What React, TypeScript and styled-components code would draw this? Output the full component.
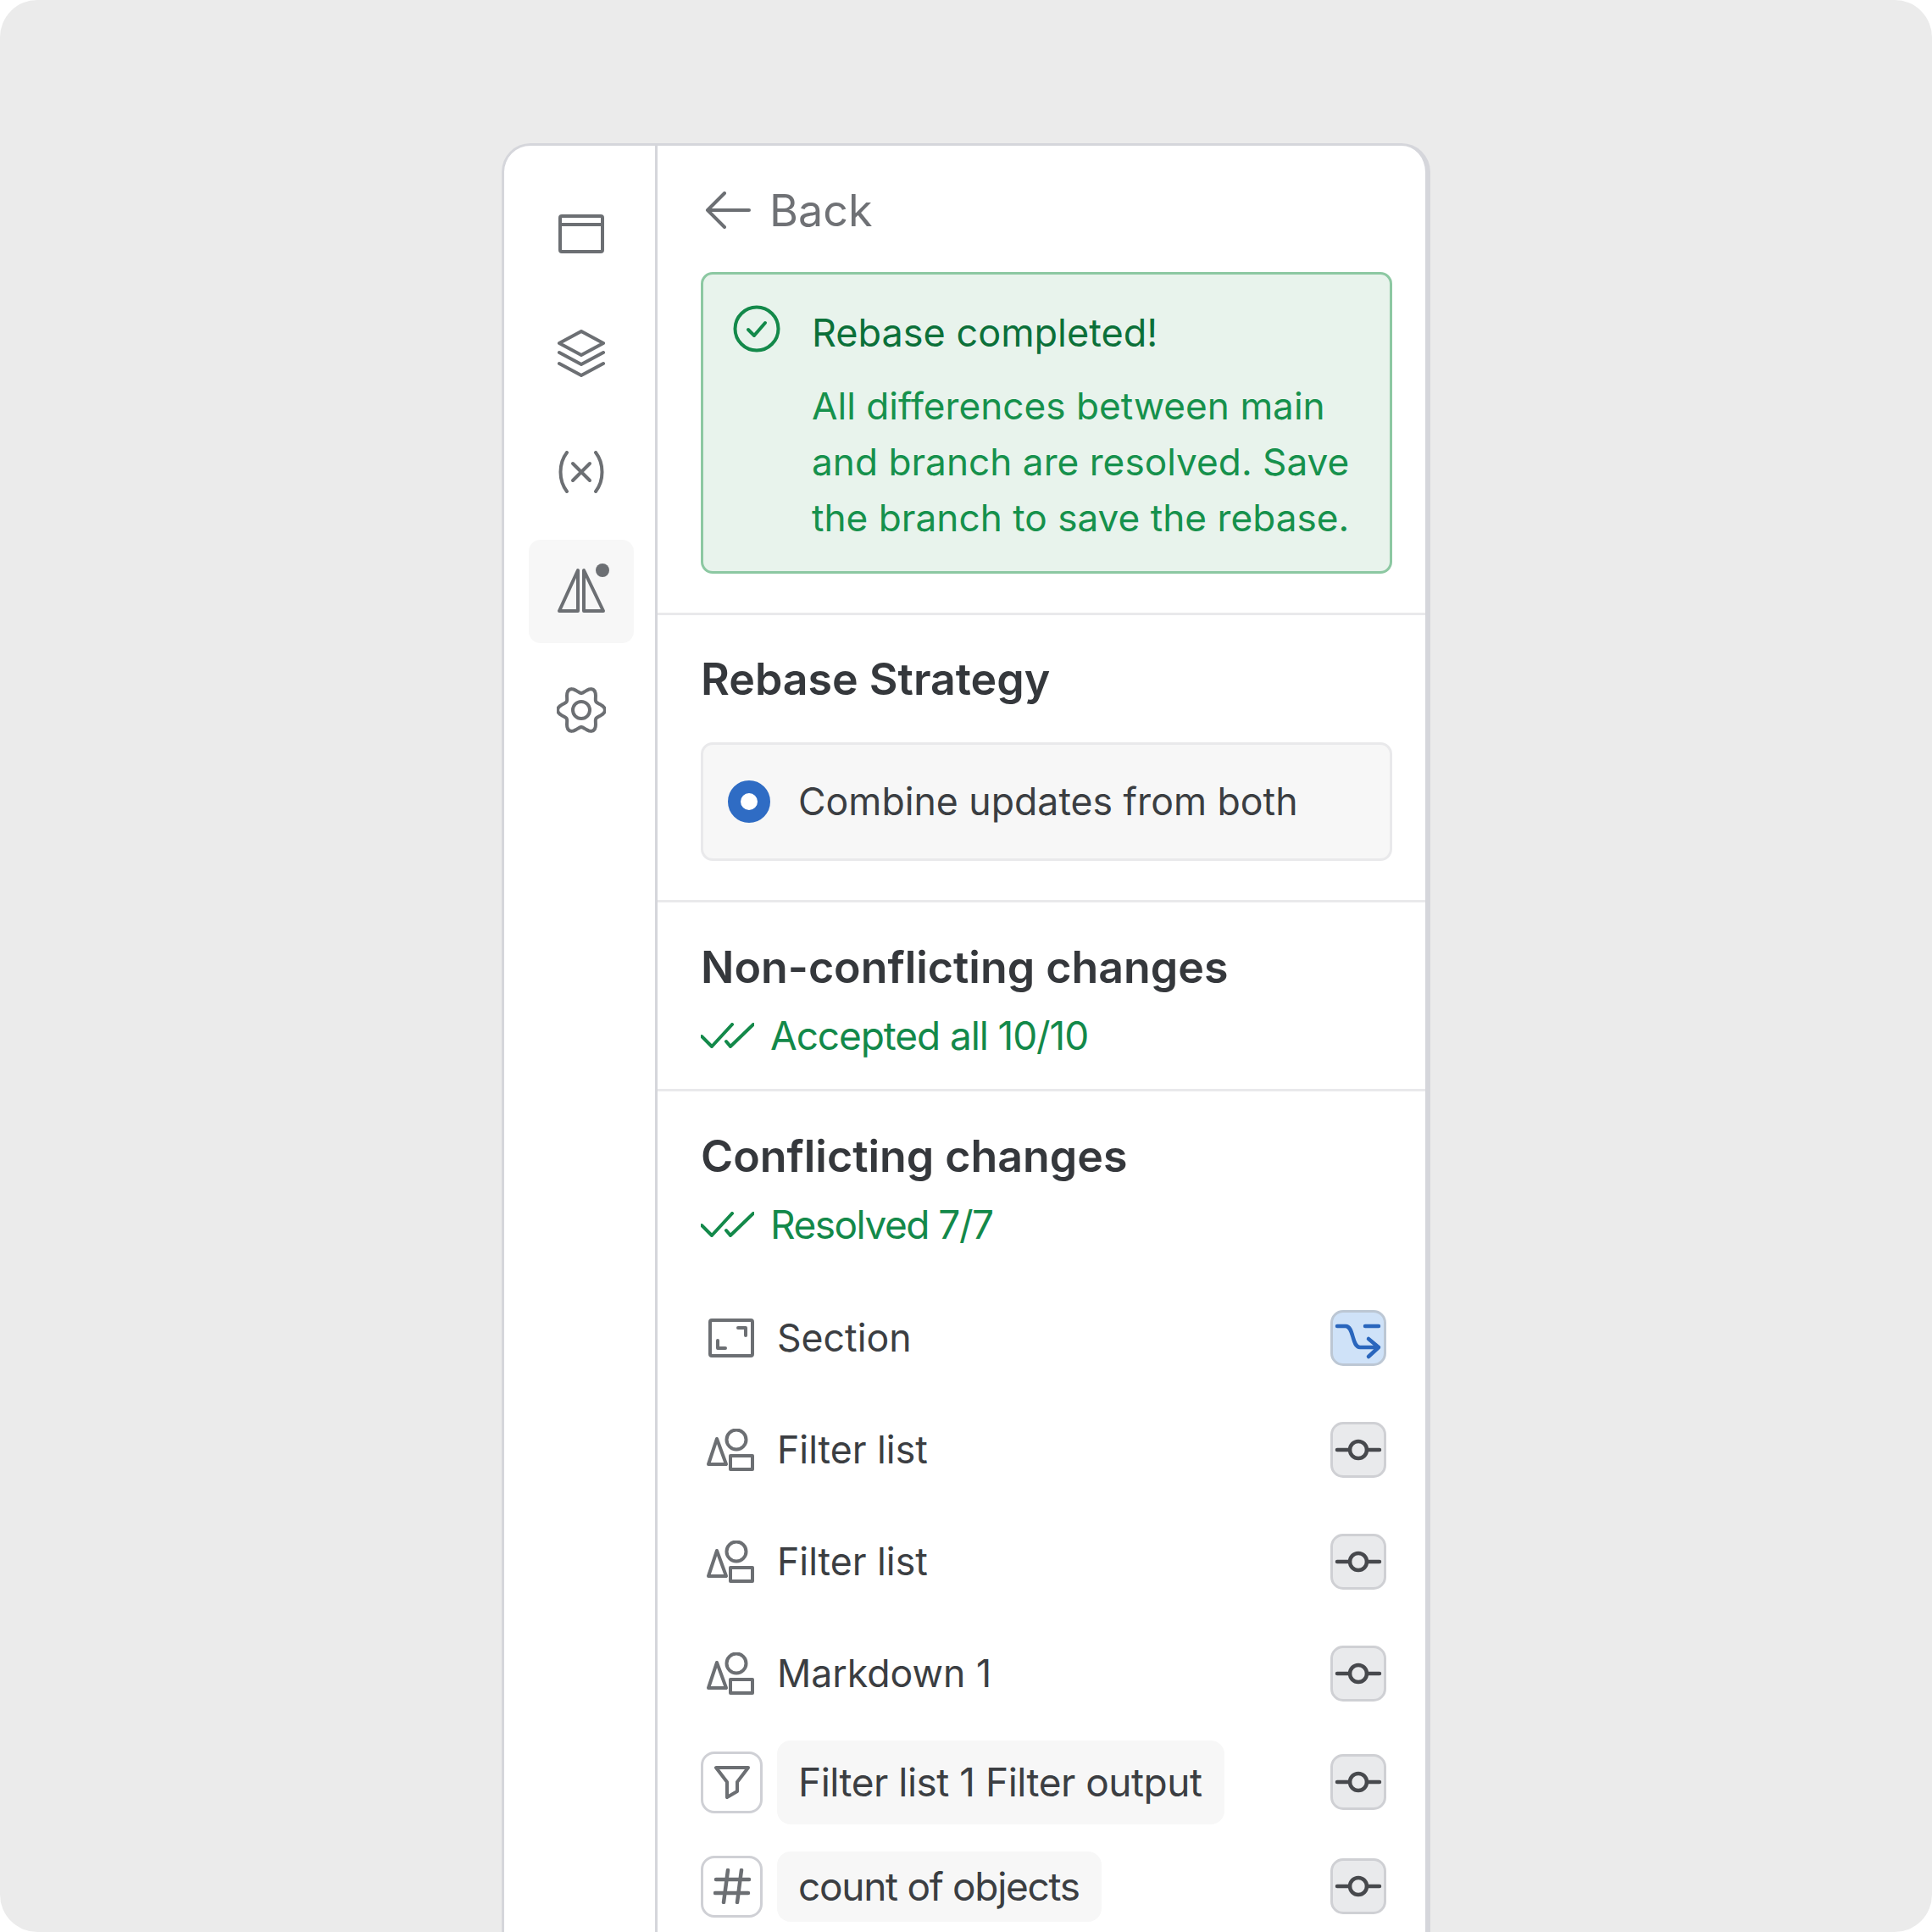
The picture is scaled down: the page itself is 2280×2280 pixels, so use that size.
import React from 'react'
import styled, { createGlobalStyle } from 'styled-components'

const GlobalStyle = createGlobalStyle`
  html, body {
    margin: 0;
    padding: 0;
    background: #fff;
  }
  * {
    box-sizing: border-box;
  }
`

const GREY = '#6c6f73'

// six petal outline of the settings icon
const gearPath = (() => {
  const pts: string[] = []
  for (let i = 0; i < 72; i++) {
    const a = (i / 72) * Math.PI * 2
    const r = 24 + 4 * Math.cos(a * 6)
    pts.push(`${(29 + r * Math.cos(a)).toFixed(2)} ${(28 + r * Math.sin(a)).toFixed(2)}`)
  }
  return `M${pts.join('L')}Z`
})()

function WindowIcon() {
  return (
    <S.Icon width="54" height="46" viewBox="0 0 54 46" $color={GREY}>
      <rect x="2" y="2" width="50" height="42" rx="2" />
      <path d="M2 12h50" />
    </S.Icon>
  )
}

function LayersIcon() {
  return (
    <S.Icon width="56" height="56" viewBox="0 0 56 56" $color={GREY}>
      <path d="M28 2l26 14-26 14L2 16z" />
      <path d="M2 27l26 14 26-14" />
      <path d="M2 40l26 14 26-14" />
    </S.Icon>
  )
}

function VariableIcon() {
  return (
    <S.Icon width="56" height="50" viewBox="0 0 56 50" $color={GREY}>
      <path d="M11 2C1 15 1 35 11 48" />
      <path d="M45 2c10 13 10 33 0 46" />
      <path d="M18 15l20 20M38 15L18 35" />
    </S.Icon>
  )
}

function CompareIcon() {
  return (
    <S.Icon width="74" height="74" viewBox="-6 -6 74 74" $color={GREY}>
      <path d="M27 6v48H5z" />
      <path d="M34 6v48h23z" />
      <circle cx="56" cy="6" r="8" fill="#6c6f73" stroke="none" />
    </S.Icon>
  )
}

function GearIcon() {
  return (
    <S.Icon width="58" height="56" viewBox="0 0 58 56" $color={GREY}>
      <path d={gearPath} />
      <circle cx="29" cy="28" r="10" />
    </S.Icon>
  )
}

function BackArrow() {
  return (
    <S.Icon width="54" height="44" viewBox="0 0 54 44" $color={GREY}>
      <path d="M52 22H3M23 2L3 22l20 20" />
    </S.Icon>
  )
}

function CheckCircle() {
  return (
    <S.Icon width="56" height="56" viewBox="0 0 56 56" $color="#13894a">
      <circle cx="28" cy="28" r="25.5" />
      <path d="M18 29l7 7 13-15" />
    </S.Icon>
  )
}

function DoubleCheck() {
  return (
    <S.Icon width="63" height="30" viewBox="0 0 63 30" $color="#13894a">
      <path d="M1 16l12 12L37 2" />
      <path d="M30 22l5 6L62 2" />
    </S.Icon>
  )
}

function SectionIcon() {
  return (
    <S.Icon width="54" height="46" viewBox="0 0 54 46" $color={GREY}>
      <rect x="2" y="2" width="50" height="42" rx="2" />
      <path d="M35 11h9v9M20 35h-9v-9" />
    </S.Icon>
  )
}

function ShapesIcon() {
  return (
    <S.Icon width="56" height="50" viewBox="0 0 56 50" $color={GREY}>
      <path d="M12 12l11 30H2z" />
      <circle cx="35" cy="13" r="11.5" />
      <rect x="28" y="32" width="26" height="16" />
    </S.Icon>
  )
}

function FunnelIcon() {
  return (
    <S.Icon width="44" height="40" viewBox="0 0 44 40" $color={GREY}>
      <path d="M3 3h38L28 20v11l-12 7V20z" />
    </S.Icon>
  )
}

function HashIcon() {
  return (
    <S.Icon width="44" height="42" viewBox="0 0 44 42" $color={GREY} $weight={4.5}>
      <path d="M17 2l-5 38M33 2l-5 38M3 13h39M2 29h39" />
    </S.Icon>
  )
}

function MergeIcon() {
  return (
    <S.Icon width="60" height="60" viewBox="0 0 60 60" $color="#2a66bd" $weight={4.5}>
      <path d="M5 16h10c10 0 7 25 17 25h22M42 31l12 10-12 11M38 16h16" />
    </S.Icon>
  )
}

function CommitIcon() {
  return (
    <S.Icon width="60" height="60" viewBox="0 0 60 60" $color="#47494d" $weight={4.5}>
      <circle cx="30" cy="30" r="10" />
      <path d="M5 30h15M40 30h15" />
    </S.Icon>
  )
}

const NAV_ITEMS = [
  { key: 'window', icon: <WindowIcon /> },
  { key: 'layers', icon: <LayersIcon /> },
  { key: 'variables', icon: <VariableIcon /> },
  { key: 'compare', icon: <CompareIcon />, active: true },
  { key: 'settings', icon: <GearIcon /> },
]

const PLAIN_ROWS = [
  { label: 'Section', icon: <SectionIcon />, picked: true },
  { label: 'Filter list', icon: <ShapesIcon /> },
  { label: 'Filter list', icon: <ShapesIcon /> },
  { label: 'Markdown 1', icon: <ShapesIcon /> },
]

function App(): React.JSX.Element {
  return (
    <S.Stage>
      <GlobalStyle />
      <S.Panel>
        <S.Sidebar>
          {NAV_ITEMS.map(item => (
            <S.NavItem key={item.key} $active={item.active}>
              {item.icon}
            </S.NavItem>
          ))}
        </S.Sidebar>
        <S.Main>
          <S.TopSection>
            <S.BackRow>
              <BackArrow />
              <S.BackLabel>Back</S.BackLabel>
            </S.BackRow>
            <S.Alert>
              <S.AlertIcon>
                <CheckCircle />
              </S.AlertIcon>
              <div>
                <S.AlertTitle>Rebase completed!</S.AlertTitle>
                <S.AlertBody>
                  All differences between main
                  <br />
                  and branch are resolved. Save
                  <br />
                  the branch to save the rebase.
                </S.AlertBody>
              </div>
            </S.Alert>
          </S.TopSection>

          <S.StrategySection>
            <S.Heading>Rebase Strategy</S.Heading>
            <S.RadioBox>
              <S.Radio />
              <S.BodyText>Combine updates from both</S.BodyText>
            </S.RadioBox>
          </S.StrategySection>

          <S.ChangesSection>
            <S.Heading>Non-conflicting changes</S.Heading>
            <S.Status>
              <DoubleCheck />
              <S.StatusText $tracking={-1.1}>Accepted all 10/10</S.StatusText>
            </S.Status>
          </S.ChangesSection>

          <S.ConflictSection>
            <S.Heading>Conflicting changes</S.Heading>
            <S.Status>
              <DoubleCheck />
              <S.StatusText $tracking={-1.5}>Resolved 7/7</S.StatusText>
            </S.Status>
            <S.RowList>
              {PLAIN_ROWS.map((row, i) => (
                <S.Row key={i} $height={132}>
                  <S.RowIcon>{row.icon}</S.RowIcon>
                  <S.RowLabel>{row.label}</S.RowLabel>
                  <S.RowButton $picked={row.picked}>
                    {row.picked ? <MergeIcon /> : <CommitIcon />}
                  </S.RowButton>
                </S.Row>
              ))}
              <S.Row $height={124}>
                <S.IconBox>
                  <FunnelIcon />
                </S.IconBox>
                <S.Chip $height={99} $tracking={-0.5}>
                  Filter list 1 Filter output
                </S.Chip>
                <S.RowButton>
                  <CommitIcon />
                </S.RowButton>
              </S.Row>
              <S.Row $height={122}>
                <S.IconBox>
                  <HashIcon />
                </S.IconBox>
                <S.Chip $height={83} $tracking={-1.3}>
                  count of objects
                </S.Chip>
                <S.RowButton>
                  <CommitIcon />
                </S.RowButton>
              </S.Row>
            </S.RowList>
          </S.ConflictSection>
        </S.Main>
      </S.Panel>
    </S.Stage>
  )
}

const FONT = `Inter, "Noto Sans", "Liberation Sans", sans-serif`

const S = {
  Stage: styled.div`
    width: 2280px;
    height: 2280px;
    padding: 169px 592px 0 592px;
    overflow: hidden;
    border-radius: 44px;
    background: #ebebeb;
    font-family: ${FONT};
  `,
  Panel: styled.div`
    display: flex;
    width: 1096px;
    height: 2300px;
    border: 3.5px solid #d5d6db;
    border-right-width: 6px;
    border-radius: 34px 34px 0 0;
    background: #fff;
  `,
  Sidebar: styled.nav`
    display: flex;
    flex: 0 0 181px;
    flex-direction: column;
    gap: 18.5px;
    align-items: center;
    padding: 43px 0 0 3px;
    border-right: 3px solid #d5d6db;
  `,
  NavItem: styled.div<{ $active?: boolean }>`
    display: flex;
    align-items: center;
    justify-content: center;
    width: 124px;
    height: 122px;
    border-radius: 14px;
    background: ${props => (props.$active ? '#f7f7f7' : 'transparent')};
  `,
  Icon: styled.svg<{ $color: string; $weight?: number }>`
    flex: none;
    display: block;
    fill: none;
    stroke: ${props => props.$color};
    stroke-width: ${props => props.$weight ?? 4};
    stroke-linecap: round;
    stroke-linejoin: round;
  `,
  Main: styled.main`
    flex: 1;
    min-width: 0;
  `,
  TopSection: styled.section`
    padding: 46px 39px 46px 51px;
    border-bottom: 3px solid #e9e9eb;
  `,
  BackRow: styled.div`
    display: flex;
    align-items: center;
    gap: 22px;
    height: 60px;
    margin-bottom: 43px;
    padding-left: 5px;
  `,
  BackLabel: styled.span`
    font-size: 52px;
    color: #6f7175;
  `,
  Alert: styled.div`
    display: flex;
    height: 356px;
    padding: 36px 30px 0 35px;
    border: 3.5px solid #8cc8a2;
    border-radius: 14px;
    background: #e8f3ec;
  `,
  AlertIcon: styled.div`
    flex: 0 0 93px;
  `,
  AlertTitle: styled.div`
    margin-bottom: 20px;
    font-size: 45px;
    font-weight: 400;
    line-height: 66px;
    color: #0b7039;
    white-space: nowrap;
  `,
  AlertBody: styled.div`
    font-size: 44.2px;
    line-height: 66px;
    color: #16914c;
    white-space: nowrap;
  `,
  StrategySection: styled.section`
    padding: 44px 39px 46px 51px;
    border-bottom: 3px solid #e9e9eb;
  `,
  Heading: styled.h2`
    margin: 0;
    font-size: 51.9px;
    font-weight: 600;
    line-height: 64px;
    color: #35383c;
    white-space: nowrap;
  `,
  RadioBox: styled.div`
    display: flex;
    align-items: center;
    gap: 33px;
    height: 140px;
    margin-top: 42px;
    padding-left: 29px;
    border: 3px solid #e9e9eb;
    border-radius: 14px;
    background: #f7f7f7;
  `,
  Radio: styled.span`
    flex: none;
    width: 50px;
    height: 50px;
    border: 15px solid #2f6cc4;
    border-radius: 50%;
    background: #fff;
  `,
  BodyText: styled.span`
    font-size: 44.6px;
    color: #3b3e42;
    white-space: nowrap;
  `,
  ChangesSection: styled.section`
    padding: 45px 39px 33px 51px;
    border-bottom: 3px solid #e9e9eb;
  `,
  ConflictSection: styled.section`
    padding: 45px 39px 0 51px;
  `,
  Status: styled.div`
    display: flex;
    align-items: center;
    gap: 19px;
    height: 60px;
    margin-top: 18px;
  `,
  StatusText: styled.span<{ $tracking: number }>`
    font-size: 46px;
    letter-spacing: ${props => props.$tracking}px;
    color: #13894a;
    white-space: nowrap;
  `,
  RowList: styled.div`
    margin-top: 38px;
    padding-right: 7px;
  `,
  Row: styled.div<{ $height: number }>`
    display: flex;
    align-items: center;
    height: ${props => props.$height}px;
  `,
  RowIcon: styled.div`
    display: flex;
    flex: 0 0 90px;
    justify-content: flex-end;
    padding-right: 27px;
  `,
  RowLabel: styled.span`
    flex: 1;
    font-size: 44.6px;
    color: #3b3e42;
    white-space: nowrap;
  `,
  IconBox: styled.div`
    display: flex;
    flex: 0 0 73px;
    align-items: center;
    justify-content: center;
    height: 73px;
    margin-right: 17px;
    border: 3px solid #cfd0d5;
    border-radius: 16px;
  `,
  Chip: styled.div<{ $height: number; $tracking: number }>`
    display: flex;
    align-items: center;
    height: ${props => props.$height}px;
    margin-right: auto;
    padding: 0 26px 0 25px;
    border-radius: 16px;
    background: #f7f7f7;
    font-size: 46px;
    letter-spacing: ${props => props.$tracking}px;
    color: #3b3e42;
    white-space: nowrap;
  `,
  RowButton: styled.div<{ $picked?: boolean }>`
    display: flex;
    flex: 0 0 66px;
    align-items: center;
    justify-content: center;
    height: 66px;
    border: 3px solid ${props => (props.$picked ? '#bcc7d4' : '#cfd0d4')};
    border-radius: 15px;
    background: ${props => (props.$picked ? '#cfe2f8' : '#e9eaec')};
  `,
}

export default App
